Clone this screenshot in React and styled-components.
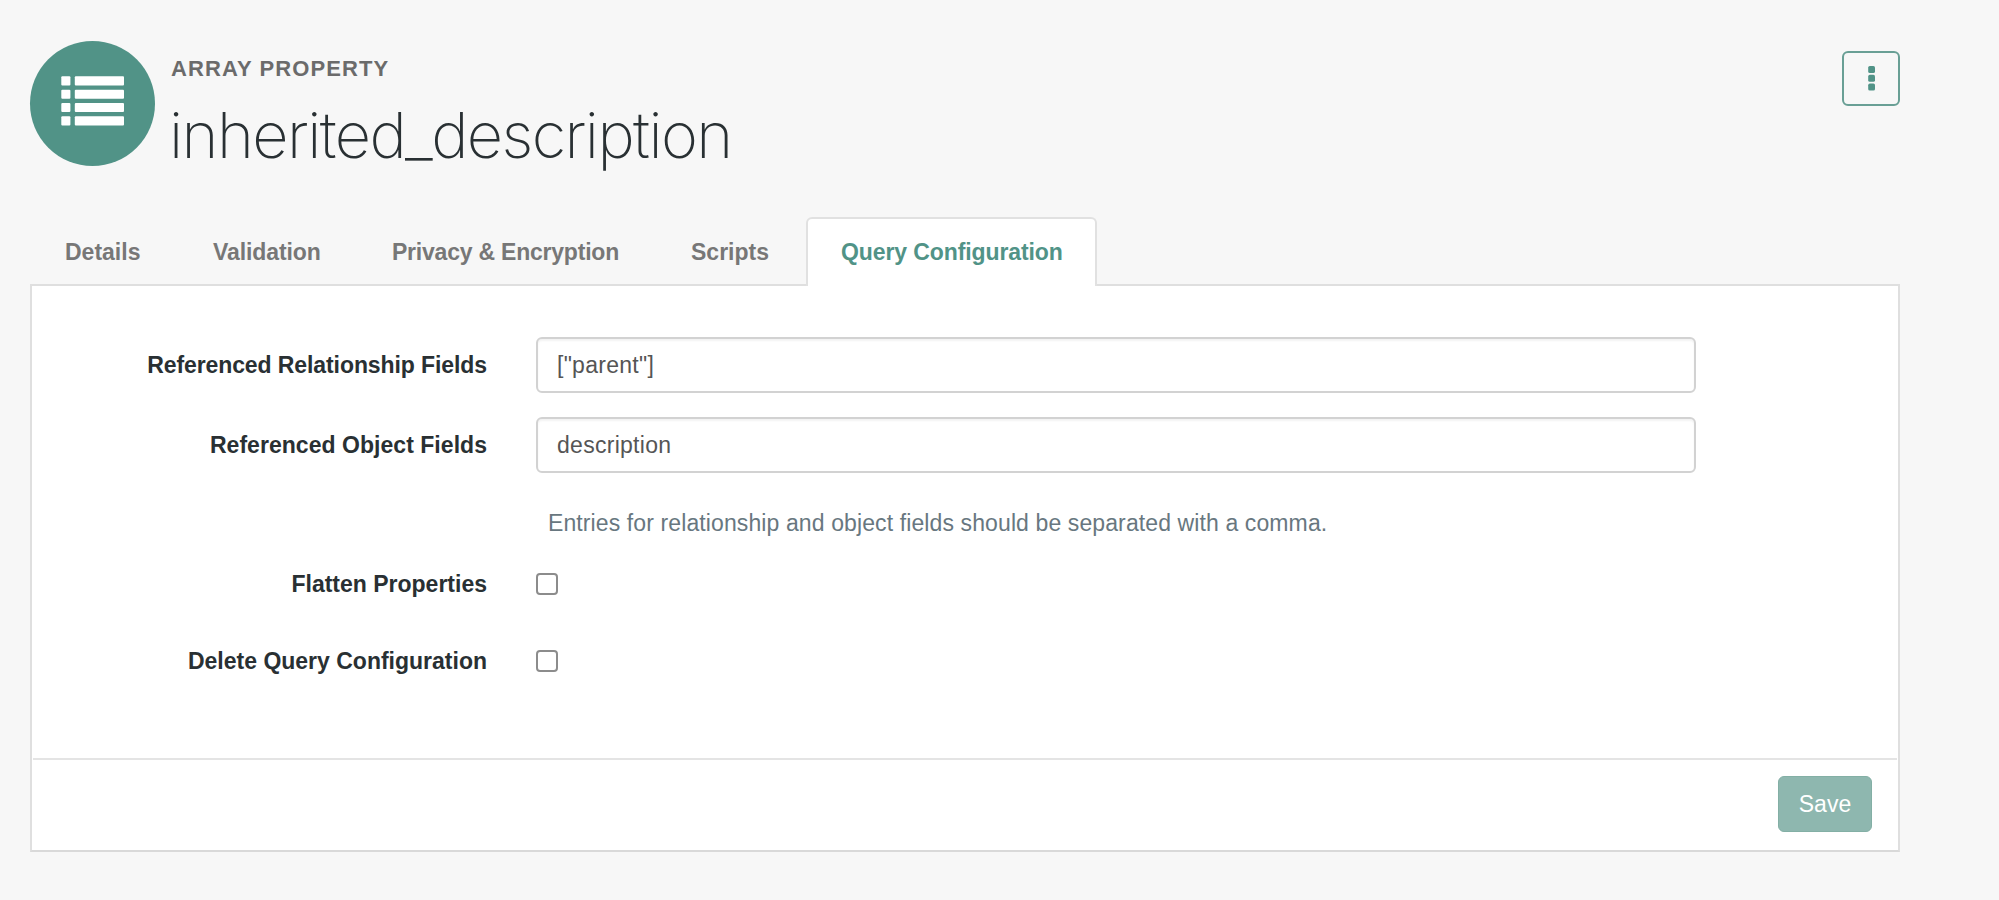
import React from 'react';
import styled, { createGlobalStyle } from 'styled-components';

const green = '#519387';

const GlobalStyle = createGlobalStyle`
  *, *::before, *::after { box-sizing: border-box; }
  html, body { margin: 0; background: #f7f7f7; }
  body {
    font-family: "Liberation Sans", Arial, sans-serif;
    font-size: 23px;
    line-height: 32px;
    color: #293033;
  }
`;

const Page = styled.main`
  width: 1999px;
  height: 900px;
  padding: 41px 99px 48px 30px;
  display: flex;
  flex-direction: column;
`;

const Header = styled.header`
  display: flex;
  height: 176px;
  align-items: flex-start;
`;

const Badge = styled.div`
  width: 125px;
  height: 125px;
  border-radius: 50%;
  background: ${green};
  padding: 35px 31px 0;
  flex: none;
  svg { display: block; }
`;

const Heading = styled.div`
  flex: 1;
  padding: 12px 0 0 16px;
`;

const Kind = styled.div`
  font-size: 22px;
  line-height: 32px;
  font-weight: 700;
  letter-spacing: 1.1px;
  color: #6b6b6b;
  white-space: nowrap;
`;

const Title = styled.h1`
  margin: 7px 0 0 -2px;
  font-family: Inter, Roboto, sans-serif;
  font-size: 63px;
  line-height: 86px;
  font-weight: 200;
  letter-spacing: -1.6px;
  white-space: nowrap;
`;

const MenuButton = styled.button`
  width: 58px;
  height: 55px;
  margin-top: 10px;
  padding: 0;
  display: flex;
  align-items: center;
  justify-content: center;
  border: 2px solid #699f95;
  border-radius: 6px;
  background: transparent;
`;

const Tabs = styled.nav`
  display: flex;
  gap: 3px;
  height: 69px;
  margin-bottom: -2px;
  z-index: 1;
`;

const Tab = styled.a`
  display: block;
  height: 69px;
  width: ${(p) => p.$width}px;
  padding: 17px 0 0 33px;
  border: 2px solid ${(p) => (p.$active ? '#e1e1e1' : 'transparent')};
  border-bottom: 0;
  border-radius: 6px 6px 0 0;
  background: ${(p) => (p.$active ? '#fff' : 'transparent')};
  color: ${(p) => (p.$active ? green : '#777')};
  font-weight: 700;
  letter-spacing: ${(p) => p.$tracking || 0}px;
  white-space: nowrap;
`;

const Panel = styled.section`
  height: 568px;
  display: flex;
  flex-direction: column;
  border: 2px solid #dfdfdf;
  border-bottom-color: #d9d9d9;
  background: #fff;
`;

const Form = styled.form`
  flex: 1;
  padding-top: 51px;
`;

const Row = styled.div`
  display: grid;
  grid-template-columns: 455px 1160px;
  column-gap: 49px;
  align-items: center;
  height: ${(p) => p.$height}px;
  margin-bottom: ${(p) => p.$after || 0}px;
`;

const Label = styled.label`
  grid-column: 1;
  text-align: right;
  font-weight: 700;
  white-space: nowrap;
  letter-spacing: ${(p) => p.$tracking || 0}px;
`;

const Input = styled.input`
  width: 100%;
  height: 56px;
  padding: 0 19px;
  border: 2px solid #d2d2d2;
  border-radius: 6px;
  background: #fff;
  box-shadow: inset 0 2px 2px rgba(0, 0, 0, 0.05);
  color: #555;
  font: inherit;
  letter-spacing: 0.28px;
`;

const Help = styled.p`
  grid-column: 2;
  margin: 0;
  padding-left: 12px;
  color: #687780;
  letter-spacing: 0.11px;
  white-space: nowrap;
`;

const Checkbox = styled.input.attrs({ type: 'checkbox' })`
  appearance: none;
  width: 22px;
  height: 22px;
  margin: 0;
  border: 2px solid #8c8c8c;
  border-radius: 4px;
  background: #fff;
`;

const Footer = styled.footer`
  height: 92px;
  margin: 0 1px;
  padding: 16px 25px 0 0;
  display: flex;
  justify-content: flex-end;
  align-items: flex-start;
  border-top: 2px solid #e4e4e4;
`;

const SaveButton = styled.button`
  width: 94px;
  height: 56px;
  padding: 0;
  border: 1px solid #83afa5;
  border-radius: 6px;
  background: #8eb7af;
  color: #fff;
  font: inherit;
`;

const tabs = [
  { name: 'Details', width: 145 },
  { name: 'Validation', width: 176, tracking: -0.1 },
  { name: 'Privacy & Encryption', width: 296, tracking: -0.22 },
  { name: 'Scripts', width: 147 },
  { name: 'Query Configuration', width: 291, tracking: -0.1, active: true },
];

const ListIcon = () => (
  <svg width="63" height="50" viewBox="0 0 63 50" fill="#fff">
    {[0.3, 13.7, 27, 40.3].map((y) => (
      <g key={y}>
        <rect x="0.3" y={y} width="9.1" height="9.1" rx="1" />
        <rect x="13.8" y={y} width="49.2" height="9.1" rx="1" />
      </g>
    ))}
  </svg>
);

const DotsIcon = () => (
  <svg width="8" height="25" viewBox="0 0 8 25" fill={green}>
    {[0, 8.8, 17.6].map((y) => (
      <rect key={y} x="1.2" y={y} width="6.8" height="7" rx="1.6" />
    ))}
  </svg>
);

export default function App() {
  return (
    <>
      <GlobalStyle />
      <Page>
        <Header>
          <Badge><ListIcon /></Badge>
          <Heading>
            <Kind>ARRAY PROPERTY</Kind>
            <Title>inherited_description</Title>
          </Heading>
          <MenuButton aria-label="More actions"><DotsIcon /></MenuButton>
        </Header>
        <Tabs>
          {tabs.map((t) => (
            <Tab key={t.name} $width={t.width} $active={t.active} $tracking={t.tracking}>{t.name}</Tab>
          ))}
        </Tabs>
        <Panel>
          <Form>
            <Row $height={56} $after={24}>
              <Label htmlFor="relationships" $tracking={-0.09}>Referenced Relationship Fields</Label>
              <Input id="relationships" defaultValue={'["parent"]'} />
            </Row>
            <Row $height={56} $after={34}>
              <Label htmlFor="objects" $tracking={0.04}>Referenced Object Fields</Label>
              <Input id="objects" defaultValue="description" />
            </Row>
            <Row $height={32} $after={29}>
              <Help>Entries for relationship and object fields should be separated with a comma.</Help>
            </Row>
            <Row $height={32} $after={45}>
              <Label htmlFor="flatten">Flatten Properties</Label>
              <Checkbox id="flatten" />
            </Row>
            <Row $height={32}>
              <Label htmlFor="delete">Delete Query Configuration</Label>
              <Checkbox id="delete" />
            </Row>
          </Form>
          <Footer>
            <SaveButton type="button">Save</SaveButton>
          </Footer>
        </Panel>
      </Page>
    </>
  );
}
